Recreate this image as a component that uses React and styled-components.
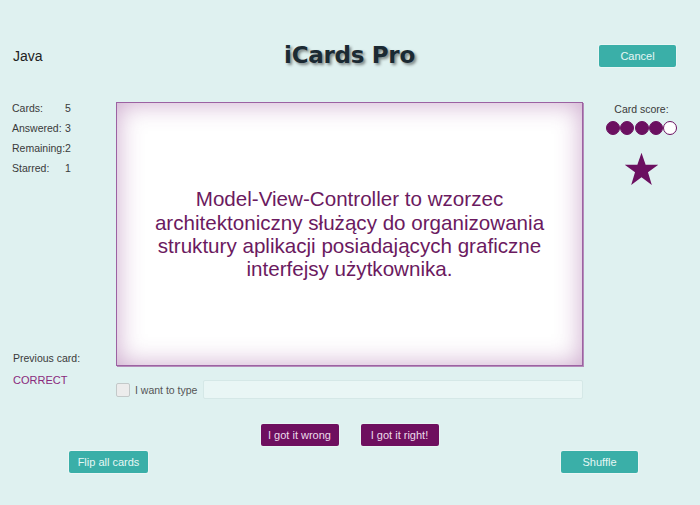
import React from 'react';
import styled, { createGlobalStyle } from 'styled-components';

const GlobalStyle = createGlobalStyle`
	html, body {
		margin: 0;
		padding: 0;
		background: #dff1f0;
	}
	body {
		font-family: "Liberation Sans", Arial, sans-serif;
		width: 700px;
		height: 505px;
		overflow: hidden;
	}
`;

const Page = styled.div`
	display: grid;
	grid-template-columns: 116px 467px 117px;
	grid-template-rows: 102px 264px auto auto auto;
	align-content: start;
	width: 700px;
	height: 505px;
`;

const DeckName = styled.div`
	align-self: center;
	padding: 10px 0 0 13px;
	font-size: 14px;
	color: #222;
`;

const Title = styled.h1`
	margin: 0;
	align-self: center;
	padding-top: 8px;
	text-align: center;
	font-family: "DejaVu Sans", Verdana, sans-serif;
	font-weight: bold;
	font-size: 23px;
	letter-spacing: -0.3px;
	color: #1b2a33;
	text-shadow: 2px 2px 3px rgba(0, 0, 0, 0.45);
`;

const TealButton = styled.button`
	width: ${(p) => p.$w || 77}px;
	height: 22px;
	border: none;
	border-radius: 2px;
	background: #3aafa8;
	color: #e6f7f5;
	font-family: "Liberation Sans", Arial, sans-serif;
	font-size: 11px;
	padding: 0;
	box-shadow: 0 0 0 1px rgba(255, 255, 255, 0.35);
	cursor: pointer;
`;

const HeaderRight = styled.div`
	align-self: center;
	padding: 10px 0 0 16px;
`;

const Sidebar = styled.div`
	grid-row: 2 / span 2;
	display: flex;
	flex-direction: column;
	padding-left: 12px;
	margin-top: -4px;
`;

const Stats = styled.div`
	display: grid;
	grid-template-columns: 53px auto;
	grid-auto-rows: 20px;
	align-items: center;
	font-size: 10.5px;
	color: #3a3a3a;
`;

const PrevLabel = styled.div`
	margin-top: 172px;
	padding-left: 1px;
	font-size: 10.5px;
	line-height: 16px;
	color: #3a3a3a;
`;

const PrevResult = styled.div`
	margin-top: 6px;
	padding-left: 1px;
	font-size: 11px;
	line-height: 16px;
	color: #8a2a7c;
`;

const Card = styled.div`
	display: flex;
	align-items: center;
	justify-content: center;
	box-sizing: border-box;
	border: 1px solid #9c62a2;
	background: #fff;
	box-shadow: inset 0 0 26px rgba(140, 60, 140, 0.45), 1px 1px 0 #b48cba;
`;

const CardText = styled.p`
	margin: 0;
	text-align: center;
	font-size: 20.6px;
	line-height: 23.3px;
	color: #6b1a60;
`;

const ScorePanel = styled.div`
	display: flex;
	flex-direction: column;
	align-items: center;
`;

const ScoreLabel = styled.div`
	font-size: 10.5px;
	line-height: 14px;
	color: #3a3a3a;
`;

const Dots = styled.div`
	display: flex;
	margin-top: 5px;
`;

const Dot = styled.span`
	width: 14px;
	height: 14px;
	box-sizing: border-box;
	border-radius: 50%;
	border: 1px solid #6b1060;
	background: ${(p) => (p.$on ? '#6b1060' : '#fff')};
	margin-left: ${(p) => (p.$first ? 0 : '0.3px')};
`;

const StarWrap = styled.div`
	margin-top: 17px;
	width: 35px;
	height: 35px;
`;

const TypeRow = styled.div`
	grid-column: 2;
	display: flex;
	align-items: center;
	margin-top: 14px;
	height: 19px;
`;

const Check = styled.span`
	width: 14px;
	height: 14px;
	box-sizing: border-box;
	border: 1px solid #c3c9c9;
	border-radius: 2px;
	background: #ececec;
`;

const TypeLabel = styled.span`
	margin: 0 6px 0 5px;
	font-size: 10.5px;
	color: #555;
`;

const TypeInput = styled.input`
	flex: 1;
	height: 19px;
	box-sizing: border-box;
	border: 1px solid #d5e8e7;
	border-radius: 2px;
	background: #e9f6f5;
	outline: none;
`;

const AnswerRow = styled.div`
	grid-column: 2;
	display: flex;
	justify-content: center;
	gap: 22px;
	margin-top: 25px;
`;

const PurpleButton = styled.button`
	width: 78px;
	height: 22px;
	border: none;
	border-radius: 2px;
	background: #6e0f5f;
	color: #ecdcea;
	font-family: "Liberation Sans", Arial, sans-serif;
	font-size: 11px;
	padding: 0;
	box-shadow: 0 0 0 1px rgba(255, 255, 255, 0.3);
	cursor: pointer;
`;

const BottomRow = styled.div`
	grid-column: 1 / -1;
	display: flex;
	justify-content: space-between;
	margin-top: 5px;
	padding: 0 62px 0 69px;
`;

const stats = [
	['Cards:', 5],
	['Answered:', 3],
	['Remaining:', 2],
	['Starred:', 1],
];

function Star() {
	return (
		<svg viewBox='0 0 100 100' width='35' height='35'>
			<polygon
				fill='#6b1060'
				points='50,2 61.8,36.5 98,36.5 68.5,58 79.5,94 50,72 20.5,94 31.5,58 2,36.5 38.2,36.5'
			/>
		</svg>
	);
}

export default function App() {
	const score = 4;
	return (
		<>
			<GlobalStyle />
			<Page>
				<DeckName>Java</DeckName>
				<Title>iCards Pro</Title>
				<HeaderRight>
					<TealButton>Cancel</TealButton>
				</HeaderRight>

				<Sidebar>
					<Stats>
						{stats.map(([label, value]) => (
							<React.Fragment key={label}>
								<span>{label}</span>
								<span>{value}</span>
							</React.Fragment>
						))}
					</Stats>
					<PrevLabel>Previous card:</PrevLabel>
					<PrevResult>CORRECT</PrevResult>
				</Sidebar>

				<Card>
					<CardText>
						Model-View-Controller to wzorzec
						<br />
						architektoniczny służący do organizowania
						<br />
						struktury aplikacji posiadających graficzne
						<br />
						interfejsy użytkownika.
					</CardText>
				</Card>

				<ScorePanel>
					<ScoreLabel>Card score:</ScoreLabel>
					<Dots>
						{[0, 1, 2, 3, 4].map((i) => (
							<Dot key={i} $on={i < score} $first={i === 0} />
						))}
					</Dots>
					<StarWrap>
						<Star />
					</StarWrap>
				</ScorePanel>

				<TypeRow>
					<Check />
					<TypeLabel>I want to type</TypeLabel>
					<TypeInput />
				</TypeRow>

				<AnswerRow>
					<PurpleButton>I got it wrong</PurpleButton>
					<PurpleButton>I got it right!</PurpleButton>
				</AnswerRow>

				<BottomRow>
					<TealButton $w={79}>Flip all cards</TealButton>
					<TealButton>Shuffle</TealButton>
				</BottomRow>
			</Page>
		</>
	);
}
